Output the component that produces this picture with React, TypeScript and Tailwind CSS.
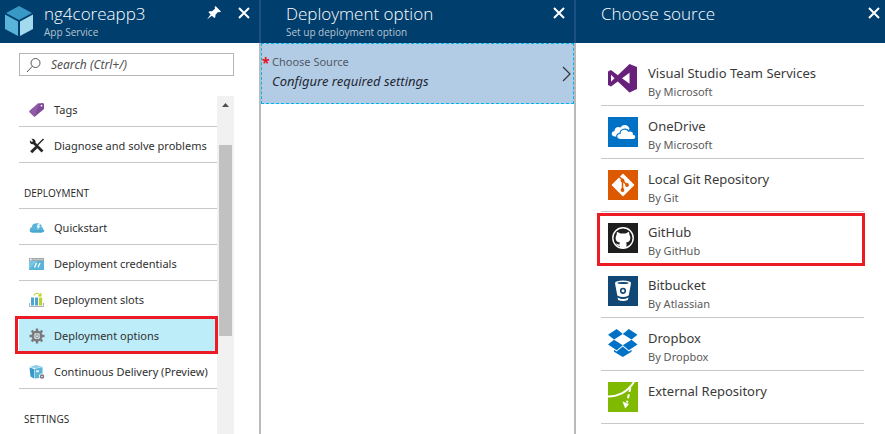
import type { ReactNode } from "react";

const gear = [0, 45, 90, 135, 180, 225, 270, 315];

function CubeIcon() {
  return (
    <svg className="h-8 w-7 shrink-0" viewBox="0 0 28 32" aria-hidden="true">
      <path d="M14 1 27 8 14 15 1 8Z" fill="#3999c6" />
      <path d="M0 9.500 13 16.500V31L0 24Z" fill="#59b4d9" />
      <path d="M28 9.500 15 16.500V31L28 24Z" fill="#a3daee" />
    </svg>
  );
}

function PinIcon() {
  return (
    <svg className="size-4" viewBox="0 0 16 16" fill="#fff" aria-hidden="true">
      <path d="M9.500 1 15 6.500 13.500 7.300 12 7 9.500 9.800 9.300 12.300 8.200 13 5.800 10.800 1 14.500 4.500 9.500 2.500 7.300 3.300 6.300 6 6.200 9 3.800 8.700 2Z" />
    </svg>
  );
}

function CloseIcon() {
  return (
    <svg className="size-3" viewBox="0 0 12 12" stroke="#fff" strokeWidth="2" aria-hidden="true">
      <path d="M1 1 11 11M11 1 1 11" />
    </svg>
  );
}

function SearchIcon() {
  return (
    <svg className="h-4 w-4 shrink-0" viewBox="0 0 16 16" fill="none" stroke="#555" aria-hidden="true">
      <circle cx="9.500" cy="6" r="4.500" />
      <path d="M6.300 9.300 1 15" />
    </svg>
  );
}

function TagIcon() {
  return (
    <svg className="size-4" viewBox="0 0 16 16" aria-hidden="true">
      <path d="M9 1.500 14 1 15 2 15 7 6 14.500 5 14.500 0.500 10 0.500 9Z" fill="#804998" />
      <path d="M9 1.500 10 1.400 6 14.500 5 14.500 0.500 10 0.500 9Z" fill="#8f5aa6" />
      <circle cx="12.500" cy="3.700" r="0.900" fill="#fff" />
    </svg>
  );
}

function ToolsIcon() {
  return (
    <svg className="size-4" viewBox="0 0 16 16" fill="none" stroke="#262626" aria-hidden="true">
      <path d="M4.500 4.500 13.500 13.500" strokeWidth="2.600" />
      <path d="M2.500 0.800 4 3 3 4 0.900 2.600C0.300 5.200 2.500 6.900 4.800 6.100L6.500 4.500C7 2.200 5.200 0.200 2.500 0.800Z" fill="#262626" stroke="none" />
      <path d="M14.500 1 8.500 7" strokeWidth="1.500" />
      <path d="M7.500 9 2.200 14.200" strokeWidth="3" />
    </svg>
  );
}

function QuickstartIcon() {
  return (
    <svg className="size-4" viewBox="0 0 16 16" aria-hidden="true">
      <path d="M3 12.500A2.800 2.800 0 0 1 3 7 3.500 3.500 0 0 1 6.500 3.500L9 3 12.500 5V7A2.900 2.900 0 0 1 12.500 12.500Z" fill="#59b4d9" />
      <path d="M9 3.500 7.500 7.500H9L8.500 10 11.500 6H10L11.500 3.500Z" fill="#e4f5fb" />
      <path d="M0.500 10.500A2.500 2.500 0 0 0 3 12.500H13A2.700 2.700 0 0 0 15.500 10Z" fill="#4aa6cf" />
    </svg>
  );
}

function CredentialsIcon() {
  return (
    <svg className="size-4" viewBox="0 0 16 16" aria-hidden="true">
      <path d="M0 2H15V14H0Z" fill="#59b4d9" />
      <path d="M0 2H15V5H0Z" fill="#9ba5aa" />
      <path d="M3.500 3H14V4H3.500Z" fill="#c5ccd0" />
      <circle cx="1.800" cy="3.500" r="0.900" fill="#fff" />
      <path d="M0 5H9L0 13Z" fill="#7cc5e2" />
      <path d="M5.500 11.500 7.500 7M9 11.500 11 7" stroke="#fff" strokeWidth="1.300" />
    </svg>
  );
}

function SlotsIcon() {
  return (
    <svg className="size-4" viewBox="0 0 16 16" aria-hidden="true">
      <path d="M0.500 11V14.500H14.500V11" fill="none" stroke="#a9afb2" />
      <path d="M2 5.500H5V13.500H2ZM6 5.500H9V13.500H6Z" fill="#4aa6cf" />
      <path d="M10 5.500H13.200V13.500H10Z" fill="#b8d432" />
      <path d="M5 3.500C6 0.500 10 0.500 11.500 3.500M9 3.800H12V1" fill="none" stroke="#b8d432" strokeWidth="1.200" />
    </svg>
  );
}

function GearIcon() {
  return (
    <svg className="size-4" viewBox="0 0 16 16" aria-hidden="true">
      {gear.map((a) => (
        <path key={a} d="M6.800 0.500H9.200V4H6.800Z" fill="#7a7a7a" transform={`rotate(${a} 8 8)`} />
      ))}
      <circle cx="8" cy="8" r="4.300" fill="none" stroke="#7a7a7a" strokeWidth="2.400" />
      <circle cx="8" cy="8" r="3.100" fill="#d5e4ea" />
      <path d="M8 4.800V8M6.300 6.500A2.100 2.100 0 1 0 9.700 6.500" fill="none" stroke="#8a8a8a" />
    </svg>
  );
}

function DeliveryIcon() {
  return (
    <svg className="size-4" viewBox="0 0 16 16" aria-hidden="true">
      <path d="M0.500 3 7 1 13 2.500 7 4.500Z" fill="#8fd0e8" />
      <path d="M0.500 3.500 5 5V14.500L1.500 12.500Z" fill="#3999c6" />
      <path d="M5.500 5 13.500 3V10L11 14 5.500 14.500Z" fill="#59b4d9" />
      <path d="M7 6.500 10 6V8L7 8.500Z" fill="#d9f0fa" />
      <circle cx="13" cy="12.500" r="3" fill="#fff" />
      <circle cx="13" cy="12.500" r="1.500" fill="none" stroke="#7a7a7a" strokeWidth="1.500" />
    </svg>
  );
}

function VisualStudioLogo() {
  return (
    <svg className="size-[30px]" viewBox="0 0 30 30" aria-hidden="true">
      <path
        fill="#68217a"
        fillRule="evenodd"
        d="M21.500 0 29 3V25L21.500 28.500 9.800 17.500 3 22.500 0 21V7.500L3 6 9.800 11.200ZM21.500 8.800 14 14.300 21.500 19.800ZM3 10.800V17.800L6.500 14.300Z"
      />
    </svg>
  );
}

function OneDriveLogo() {
  return (
    <svg className="size-[30px]" viewBox="0 0 30 30" aria-hidden="true">
      <path d="M0 0H30V30H0Z" fill="#0072c6" />
      <path d="M7 19.500C3 19.500 2.500 14.500 6.500 14 6.500 10.500 10 9 12.500 10.500 15 6.500 20.500 7.500 21.500 12L12 20Z" fill="#fff" />
      <path
        d="M12.500 22.500C7.500 22.500 7.500 16.800 12 16.500 12 12 18.500 10.500 20.500 14.200 23.500 13 26 15 25.500 17.500 29 17.800 28.500 22.500 25.500 22.500Z"
        fill="#fff"
        stroke="#0072c6"
        strokeWidth="1.200"
      />
    </svg>
  );
}

function GitLogo() {
  return (
    <svg className="size-[30px]" viewBox="0 0 30 30" aria-hidden="true">
      <path d="M0 0H30V30H0Z" fill="#dd5900" />
      <path d="M15 4.500 25.500 15 15 25.500 4.500 15Z" fill="#fff" stroke="#fff" strokeWidth="1.500" strokeLinejoin="round" />
      <path d="M11 6.500 14.500 10V20M14.500 10.500 19 15" fill="none" stroke="#dd5900" strokeWidth="1.500" />
      <circle cx="14.500" cy="10.500" r="1.900" fill="#dd5900" />
      <circle cx="14.500" cy="20" r="1.900" fill="#dd5900" />
      <circle cx="19" cy="15" r="1.900" fill="#dd5900" />
    </svg>
  );
}

function GitHubLogo() {
  return (
    <svg className="size-[30px]" viewBox="0 0 30 30" aria-hidden="true">
      <path d="M0 0H30V30H0Z" fill="#1e1e1e" />
      <circle cx="15" cy="15" r="10.200" fill="none" stroke="#fff" strokeWidth="1.400" />
      <path
        d="M9 8.800 12.500 10.500H17.500L21 8.800 21.500 12C23.500 15.500 22 19.200 18 19.600 18.800 20.500 18.500 22 18.500 25H11.500V22.800C9.500 23.200 8.900 22.200 8 20.600 9.700 20.600 9.600 22 11.500 21.500 11.500 20.500 11.700 20 12 19.600 8 19.200 6.500 15.500 8.500 12Z"
        fill="#fff"
      />
    </svg>
  );
}

function BitbucketLogo() {
  return (
    <svg className="size-[30px]" viewBox="0 0 30 30" aria-hidden="true">
      <path d="M0 0H30V30H0Z" fill="#104775" />
      <path d="M7 7.500 9.300 19.500Q15 22.500 20.700 19.500L23 7.500Z" fill="#fff" />
      <ellipse cx="15" cy="7" rx="8" ry="2.500" fill="#fff" />
      <ellipse cx="15" cy="7" rx="5.500" ry="1.100" fill="#104775" />
      <circle cx="15" cy="14.800" r="2.300" fill="#fff" stroke="#104775" strokeWidth="1.600" />
      <path d="M9.500 21.500Q15 24.500 20.500 21.500L19.800 24Q15 26 10.200 24Z" fill="#fff" />
    </svg>
  );
}

function DropboxLogo() {
  return (
    <svg className="size-[30px]" viewBox="0 0 30 30" fill="#0072c6" aria-hidden="true">
      <path d="M8.700 0 14.800 5 6 10.500 0 5.700ZM20.800 0 29.500 5.700 23.500 10.500 14.800 5ZM6 10.800 14.800 16.200 8.700 21.300 0 15.600ZM23.500 10.800 29.500 15.600 20.800 21.300 14.800 16.200ZM14.800 17.500 20.900 22.500 23.500 20.800V22.800L14.800 28 6 22.800V20.800L8.700 22.500Z" />
    </svg>
  );
}

function ExternalLogo() {
  return (
    <svg className="size-[30px]" viewBox="0 0 30 30" aria-hidden="true">
      <path d="M0 0H30V30H0Z" fill="#7fba00" />
      <path d="M0 14.500C12 14.500 20 9 26 0" fill="none" stroke="#fff" strokeWidth="2" />
      <path d="M22.300 6 19 20.500" fill="none" stroke="#fff" strokeWidth="2" strokeDasharray="4 2.500" />
      <path d="M14.500 19.500 21 22 17.200 26.500Z" fill="#fff" />
    </svg>
  );
}

type NavEntry = { label: string; icon: ReactNode; active?: boolean };

const general: NavEntry[] = [
  { label: "Tags", icon: <TagIcon /> },
  { label: "Diagnose and solve problems", icon: <ToolsIcon /> },
];

const deployment: NavEntry[] = [
  { label: "Quickstart", icon: <QuickstartIcon /> },
  { label: "Deployment credentials", icon: <CredentialsIcon /> },
  { label: "Deployment slots", icon: <SlotsIcon /> },
  { label: "Deployment options", icon: <GearIcon />, active: true },
  { label: "Continuous Delivery (Preview)", icon: <DeliveryIcon /> },
];

const sources = [
  { name: "Visual Studio Team Services", by: "By Microsoft", logo: <VisualStudioLogo /> },
  { name: "OneDrive", by: "By Microsoft", logo: <OneDriveLogo /> },
  { name: "Local Git Repository", by: "By Git", logo: <GitLogo /> },
  { name: "GitHub", by: "By GitHub", logo: <GitHubLogo />, marked: true },
  { name: "Bitbucket", by: "By Atlassian", logo: <BitbucketLogo /> },
  { name: "Dropbox", by: "By Dropbox", logo: <DropboxLogo /> },
  { name: "External Repository", by: "", logo: <ExternalLogo /> },
];

function BladeHeader({ title, subtitle, icon, pin }: { title: string; subtitle?: string; icon?: ReactNode; pin?: boolean }) {
  return (
    <header
      className={`flex h-[43px] shrink-0 items-start bg-[#003e6e] font-['Open_Sans','Noto_Sans',sans-serif] ${icon ? "gap-[11px] pl-[5px]" : "pl-[25px]"} ${subtitle ? "pr-[9px]" : "pr-[5px]"}`}
    >
      {icon && <div className="pt-[5px]">{icon}</div>}
      <div className="min-w-0 flex-1 pt-[3px] whitespace-nowrap">
        <h2 className="text-[17px] leading-[22px] font-light text-white">{title}</h2>
        {subtitle && <p className="text-[10px] leading-[14px] font-medium text-[#b8c4ce]">{subtitle}</p>}
      </div>
      <div className="flex items-center gap-4 pt-[5px]">
        {pin && (
          <button type="button" aria-label="Pin" className="size-4">
            <PinIcon />
          </button>
        )}
        <button type="button" aria-label="Close" className="flex h-4 w-3 items-center">
          <CloseIcon />
        </button>
      </div>
    </header>
  );
}

function NavItem({ item }: { item: NavEntry }) {
  return (
    <li className="relative">
      <a
        href="#"
        className={`flex h-9 items-center gap-[9px] border-b border-[#c8c8c8] pt-[3px] pl-[10px] text-[11px] whitespace-nowrap text-[#303030] ${item.active ? "bg-[#beedfa]" : ""}`}
      >
        {item.icon}
        {item.label}
      </a>
      {item.active && <span className="pointer-events-none absolute -top-px -right-px -bottom-px -left-1 z-10 border-3 border-[#ed1c24]" />}
    </li>
  );
}

function SectionTitle({ children }: { children: ReactNode }) {
  return (
    <h3 className="flex h-[46px] items-center border-b border-[#c8c8c8] pt-4 pl-[5px] font-['Open_Sans','Noto_Sans',sans-serif] text-[10px] text-[#252525]">
      {children}
    </h3>
  );
}

export default function App() {
  return (
    <div className="flex h-screen overflow-hidden bg-white font-['Noto_Sans','Open_Sans',sans-serif]">
      <section className="flex w-[261px] shrink-0 flex-col">
        <div className="border-r-2 border-[#1b5080]">
          <BladeHeader title="ng4coreapp3" subtitle="App Service" icon={<CubeIcon />} pin />
        </div>
        <div className="flex min-h-0 flex-1 flex-col border-r-2 border-[#bababa] pt-[10px]">
          <label className="mr-[25px] ml-[19px] flex h-[23px] shrink-0 items-center gap-[9px] border border-[#b5b5b5] pl-[6px]">
            <SearchIcon />
            <input
              type="search"
              aria-label="Search"
              placeholder="Search (Ctrl+/)"
              className="min-w-0 flex-1 text-[12px] leading-4 italic outline-none placeholder:text-[#505050]"
            />
          </label>
          <div className="mt-5 mr-[25px] flex min-h-0 flex-1 justify-between">
            <nav className="min-w-0 flex-1 pl-[19px]">
              <ul className="-mt-[5px]">
                {general.map((item) => (
                  <NavItem key={item.label} item={item} />
                ))}
              </ul>
              <SectionTitle>DEPLOYMENT</SectionTitle>
              <ul>
                {deployment.map((item) => (
                  <NavItem key={item.label} item={item} />
                ))}
              </ul>
              <SectionTitle>SETTINGS</SectionTitle>
            </nav>
            <div className="flex w-[17px] shrink-0 flex-col items-center bg-[#f1f1f1]">
              <svg className="h-[49px] w-[17px] shrink-0" viewBox="0 0 17 49" aria-hidden="true">
                <path d="M5 11 8.500 7 12 11Z" fill="#505050" />
              </svg>
              <div className="h-[191px] w-[13px] bg-[#c1c1c1]" />
            </div>
          </div>
        </div>
      </section>

      <section className="flex w-[315px] shrink-0 flex-col">
        <div className="border-r-2 border-[#1b5080]">
          <BladeHeader title="Deployment option" subtitle="Set up deployment option" />
        </div>
        <div className="flex flex-1 flex-col border-r-2 border-[#bababa]">
          <button type="button" className="flex h-[61px] items-center border border-dashed border-[#00b4f0] bg-[#b3cce6] pr-[2px] text-left">
            <span className="w-[10px] self-start pt-[9px] text-[14px] leading-5 font-bold text-[#e81123]">*</span>
            <span className="flex-1 pb-[3px] whitespace-nowrap">
              <span className="block text-[11px] leading-[18px] text-[#505a64]">Choose Source</span>
              <span className="block text-[13px] leading-5 text-[#1e2832] italic">Configure required settings</span>
            </span>
            <svg className="h-4 w-[9px]" viewBox="0 0 9 16" fill="none" stroke="#333" strokeWidth="1.200" aria-hidden="true">
              <path d="M1 1 8 8 1 15" />
            </svg>
          </button>
        </div>
      </section>

      <section className="flex min-w-0 flex-1 flex-col">
        <BladeHeader title="Choose source" />
        <ul className="mr-[21px] ml-[25px] pt-[10px]">
          {sources.map((source) => (
            <li key={source.name} className="relative">
              <button type="button" className="flex h-[53px] w-full items-start gap-[10px] border-b border-[#c8c8c8] pt-[11px] pl-[7px] text-left whitespace-nowrap">
                {source.logo}
                <span>
                  <span className="block text-[13px] leading-[18px] text-[#3a3a3a]">{source.name}</span>
                  <span className="block text-[11px] leading-[19px] text-[#5a5a5a]">{source.by}</span>
                </span>
              </button>
              {source.marked && <span className="pointer-events-none absolute top-px -right-px -bottom-px -left-1 border-3 border-[#ed1c24]" />}
            </li>
          ))}
        </ul>
      </section>
    </div>
  );
}
